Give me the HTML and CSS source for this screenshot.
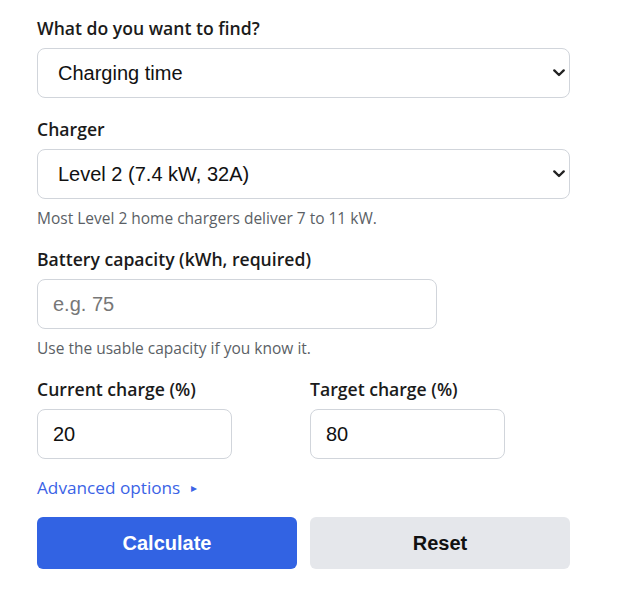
FILE: index.html
```html
<!DOCTYPE html>
<html lang="en">
<head>
<meta charset="utf-8">
<title>EV Charging Calculator</title>
<link rel="stylesheet" href="styles.css">
</head>
<body>
<form class="calc">
  <div class="field">
    <label class="label" for="mode">What do you want to find?</label>
    <div class="select-wrap">
      <select id="mode" class="control">
        <option>Charging time</option>
      </select>
      <svg class="chev" width="12" height="8" viewBox="0 0 12 8" aria-hidden="true"><path d="M1.3 1.4 L6 6 L10.7 1.4" fill="none" stroke="#222" stroke-width="2.3" stroke-linecap="round" stroke-linejoin="round"/></svg>
    </div>
  </div>
  <div class="field">
    <label class="label" for="charger">Charger</label>
    <div class="select-wrap">
      <select id="charger" class="control">
        <option>Level 2 (7.4 kW, 32A)</option>
      </select>
      <svg class="chev" width="12" height="8" viewBox="0 0 12 8" aria-hidden="true"><path d="M1.3 1.4 L6 6 L10.7 1.4" fill="none" stroke="#222" stroke-width="2.3" stroke-linecap="round" stroke-linejoin="round"/></svg>
    </div>
    <p class="help">Most Level 2 home chargers deliver 7 to 11 kW.</p>
  </div>
  <div class="field">
    <label class="label" for="cap">Battery capacity (kWh, required)</label>
    <input id="cap" class="control narrow" type="text" placeholder="e.g. 75">
    <p class="help">Use the usable capacity if you know it.</p>
  </div>
  <div class="row">
    <div class="field">
      <label class="label" for="cur">Current charge (%)</label>
      <input id="cur" class="control narrow" type="text" value="20">
    </div>
    <div class="field">
      <label class="label" for="tgt">Target charge (%)</label>
      <input id="tgt" class="control narrow" type="text" value="80">
    </div>
  </div>
  <div class="advanced">Advanced options <span class="tri">&#9656;</span></div>
  <div class="buttons">
    <button type="button" class="btn primary">Calculate</button>
    <button type="button" class="btn secondary">Reset</button>
  </div>
</form>
</body>
</html>
```
FILE: styles.css
```css
* { box-sizing: border-box; }
body {
  margin: 0;
  background: #fff;
  font-family: "Open Sans", "Noto Sans", sans-serif;
  color: #1a1a1a;
}
.calc {
  width: 533px;
  margin: 16px 0 0 37px;
}
.field {
  display: flex;
  flex-direction: column;
  margin-bottom: 19px;
}
.label {
  font-size: 17.6px;
  font-weight: 600;
  color: #1b1b1b;
  line-height: 24px;
  margin-bottom: 8px;
}
.select-wrap {
  position: relative;
}
.chev {
  position: absolute;
  right: 5px;
  top: 21px;
  pointer-events: none;
}
.control {
  width: 100%;
  height: 50px;
  border: 1px solid #d1d5db;
  border-radius: 8px;
  background: #fff;
  font-family: "Liberation Sans", Arial, sans-serif;
  font-size: 20px;
  color: #111;
  padding: 0 15px;
}
select.control {
  appearance: none;
  -webkit-appearance: none;
  padding-left: 20px;
  padding-right: 24px;
}
.narrow { width: 75%; }
.control::placeholder { color: #777; }
.help {
  margin: 9px 0 0;
  font-size: 15.5px;
  line-height: 20px;
  color: #5b5f66;
}
.row {
  display: grid;
  grid-template-columns: 1fr 1fr;
  column-gap: 13px;
}
.advanced {
  font-size: 17.2px;
  color: #3b63e6;
  line-height: 24px;
  margin-top: -2px;
}
.tri { font-size: 12px; margin-left: 6px; vertical-align: 2px; }
.buttons {
  display: grid;
  grid-template-columns: 1fr 1fr;
  column-gap: 13px;
  margin-top: 17px;
}
.btn {
  height: 52px;
  border: none;
  border-radius: 6px;
  font-family: "Liberation Sans", Arial, sans-serif;
  font-size: 20px;
  font-weight: bold;
}
.primary { background: #3263e3; color: #fff; }
.secondary { background: #e5e7eb; color: #111; }
```
